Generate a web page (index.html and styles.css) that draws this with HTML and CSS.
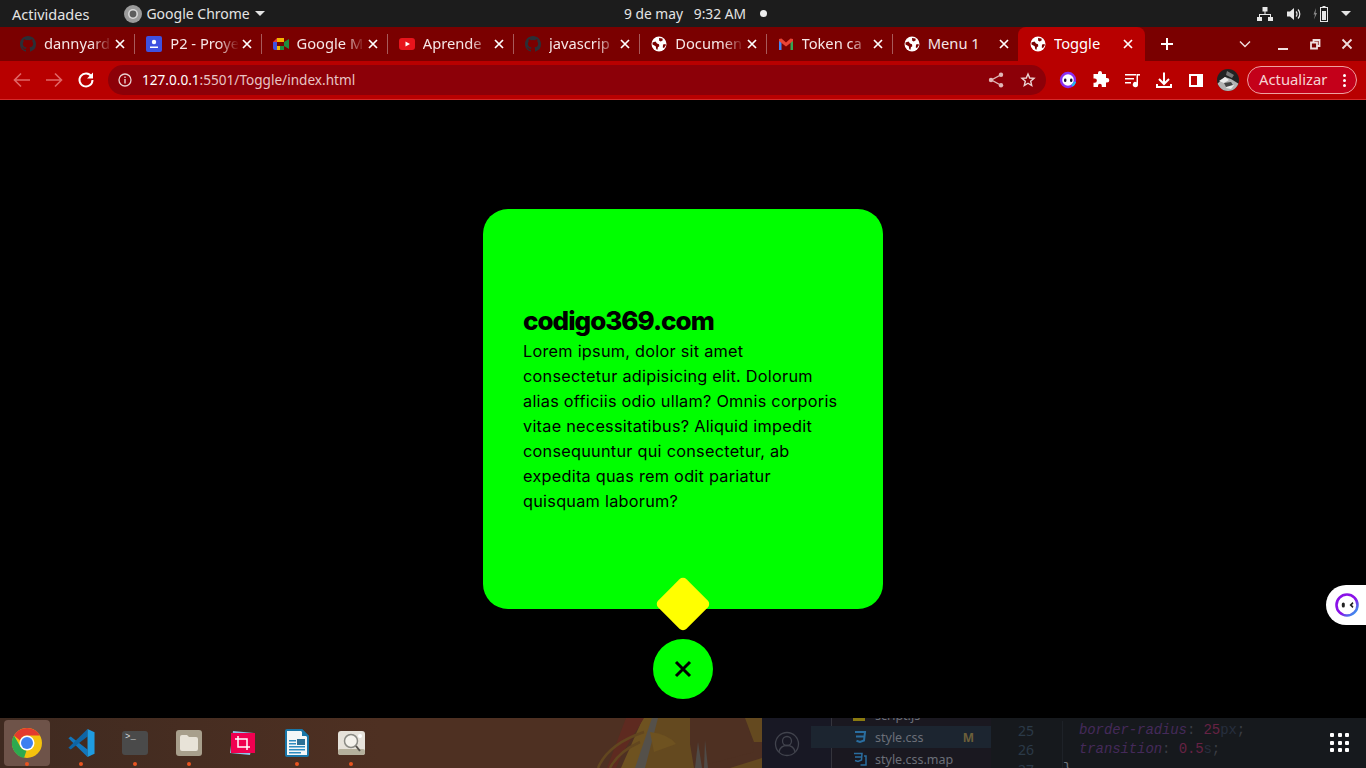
FILE: index.html
```html
<!DOCTYPE html>
<html lang="en">
<head>
    <meta charset="UTF-8">
    <meta name="viewport" content="width=device-width, initial-scale=1.0">
    <title>Toggle</title>
    <link rel="stylesheet" href="styles.css">
</head>
<body>
    <svg class="defs" width="0" height="0">
        <symbol id="i-github" viewBox="0 0 16 16"><path fill="#2b2f36" d="M8 0C3.58 0 0 3.58 0 8c0 3.54 2.29 6.53 5.47 7.59.4.07.55-.17.55-.38v-1.34c-2.23.48-2.7-1.07-2.7-1.07-.36-.92-.89-1.17-.89-1.17-.73-.5.05-.49.05-.49.8.06 1.23.83 1.23.83.71 1.22 1.87.87 2.33.66.07-.52.28-.87.5-1.07-1.77-.2-3.64-.89-3.64-3.95 0-.87.31-1.59.82-2.15-.08-.2-.36-1.02.08-2.12 0 0 .67-.21 2.2.82a7.6 7.6 0 0 1 4 0c1.53-1.04 2.2-.82 2.2-.82.44 1.1.16 1.92.08 2.12.51.56.82 1.27.82 2.15 0 3.07-1.87 3.75-3.65 3.95.29.25.54.73.54 1.48v2.2c0 .21.15.46.55.38A8 8 0 0 0 16 8c0-4.42-3.58-8-8-8z"/></symbol>
        <symbol id="i-globe" viewBox="0 0 16 16"><circle cx="8" cy="8" r="7.500" fill="#fff"/><path fill="#7a0000" d="M1.500 6.500 4.500 5.500l1.500 2 2 .8.300 2-1.400 1-.4 2.400-1.200-.4-.6-3L1.500 8.500zM8 2l3.400.4.4 1.800-2 1.200-1.600-.6zM12 8.500l2.500-.6.300 1.400-1.800 2.700-1.200-.6z"/></symbol>
        <symbol id="i-close" viewBox="0 0 16 16"><path fill="none" stroke="currentColor" stroke-width="1.700" d="M4 4l8 8M12 4l-8 8"/></symbol>
        <symbol id="i-css" viewBox="0 0 14 14"><path fill="none" stroke="#2a6ea0" stroke-width="2" d="M2 2h10l-1 8.500L7 12l-3.500-1.200M3 6.500h8"/></symbol>
        <symbol id="i-cssmap" viewBox="0 0 14 14"><path fill="none" stroke="#2a6ea0" stroke-width="1.500" d="M1 1.500h8L8.500 8 5 9.500 2 8.500M2 5h6.500M11 4h2v9H7.500"/></symbol>
    </svg>

    <header class="top-bar">
        <span class="top-left">
            <span class="activities">Actividades</span>
            <span class="app-name">
                <svg class="app-icon" viewBox="0 0 18 18"><circle cx="9" cy="9" r="9" fill="#9b9b9b"/><circle cx="9" cy="9" r="5" fill="#d8d8d8"/><circle cx="9" cy="9" r="3.400" fill="#5d5d5d"/></svg>
                Google Chrome
                <i class="caret"></i>
            </span>
        </span>
        <span class="clock">9 de may&nbsp;&nbsp; 9:32 AM</span>
        <i class="rec-dot"></i>
        <span class="tray">
            <svg width="16" height="16" viewBox="0 0 16 16" fill="#e8e8e8"><path d="M5.500 1h5v4.500h-5zM0 11h5v4H0zM11 11h5v4h-5zM7.500 5.500h1V8h5.500v3h-1V9H3v2H2V8h5.500z"/></svg>
            <svg width="16" height="16" viewBox="0 0 16 16" fill="#e8e8e8"><path d="M1 5.500h3L8 2v12l-4-3.500H1z"/><path fill="none" stroke="#e8e8e8" stroke-width="1.200" d="M10 5.500a3.500 3.500 0 0 1 0 5M12 3.500a6.500 6.500 0 0 1 0 9"/></svg>
            <svg class="battery" width="20" height="16" viewBox="0 0 20 16"><path fill="#8a8a8a" d="M6 2 3.500 8.500h1.500l-1 5 3-6.500H5.500z"/><path fill="#e8e8e8" d="M12.500 0h3v1h-3zM10 1h8v15h-8zm1 1v13h6V2z"/><path fill="#e8e8e8" d="M12 5h4v9h-4z"/></svg>
            <i class="caret"></i>
        </span>
    </header>

    <nav class="tab-strip">
        <div class="tab"><svg class="favicon"><use href="#i-github"/></svg><span class="tab-title">dannyard</span><svg class="tab-close"><use href="#i-close"/></svg></div>
        <div class="tab"><svg class="favicon" viewBox="0 0 16 16"><rect width="16" height="16" rx="2" fill="#3f51e0"/><circle cx="8" cy="6" r="2.200" fill="#fff"/><path fill="#fff" d="M4 10.500h8V12H4z"/></svg><span class="tab-title">P2 - Proye</span><svg class="tab-close"><use href="#i-close"/></svg></div>
        <div class="tab"><svg class="favicon" viewBox="0 0 16 16"><path fill="#f4b400" d="M4 2h7v4H4z"/><path fill="#1e8e3e" d="M7 10h4v4H7zM11 6l5-3v10l-5-3z"/><path fill="#e53935" d="M0 6l4-4v4z"/><path fill="#3f51e0" d="M0 6h4v8H2a2 2 0 0 1-2-2z"/><path fill="#7a0000" d="M4 6h7v4H4z"/><path fill="#f4b400" d="M4 10h3v4H4z"/></svg><span class="tab-title">Google M</span><svg class="tab-close"><use href="#i-close"/></svg></div>
        <div class="tab"><svg class="favicon" viewBox="0 0 16 16"><rect y="2" width="16" height="12" rx="3" fill="#e8141c"/><path fill="#fff" d="M6.500 5.500 11 8l-4.500 2.500z"/></svg><span class="tab-title">Aprende</span><svg class="tab-close"><use href="#i-close"/></svg></div>
        <div class="tab"><svg class="favicon"><use href="#i-github"/></svg><span class="tab-title">javascrip</span><svg class="tab-close"><use href="#i-close"/></svg></div>
        <div class="tab"><svg class="favicon"><use href="#i-globe"/></svg><span class="tab-title">Documen</span><svg class="tab-close"><use href="#i-close"/></svg></div>
        <div class="tab"><svg class="favicon" viewBox="0 0 16 16"><path fill="#4285f4" d="M1 3.500 3.500 4v10H1z"/><path fill="#34a853" d="M12.500 4l2.500-.5V14h-2.500z"/><path fill="#ea4335" d="M1 3l2.500-.5L8 6.500l4.500-4L15 3v2l-7 5.500L1 5z"/></svg><span class="tab-title">Token ca</span><svg class="tab-close"><use href="#i-close"/></svg></div>
        <div class="tab no-sep"><svg class="favicon"><use href="#i-globe"/></svg><span class="tab-title tab-title-full">Menu 1</span><svg class="tab-close"><use href="#i-close"/></svg></div>
        <div class="tab tab-active"><svg class="favicon"><use href="#i-globe"/></svg><span class="tab-title tab-title-full">Toggle</span><svg class="tab-close"><use href="#i-close"/></svg></div>
        <svg class="new-tab" width="14" height="14" viewBox="0 0 14 14"><path stroke="#fff" stroke-width="2" d="M7 1v12M1 7h12"/></svg>
        <span class="win-buttons">
            <svg width="12" height="8" viewBox="0 0 12 8"><path fill="none" stroke="#f0dede" stroke-width="1.400" d="M1 1.500l5 5 5-5"/></svg>
            <svg width="16" height="16" viewBox="0 0 16 16"><path fill="#f0dede" d="M3 12h10v2H3z"/></svg>
            <svg width="16" height="16" viewBox="0 0 16 16"><path fill="none" stroke="#f0dede" stroke-width="1.800" d="M4 6.500h6v6H4zM6.500 6.500V4h6v6H10"/></svg>
            <svg width="16" height="16" viewBox="0 0 16 16"><path fill="none" stroke="#f0dede" stroke-width="1.800" d="M3.500 3.500l9 9M12.500 3.500l-9 9"/></svg>
        </span>
    </nav>

    <div class="toolbar">
        <svg class="nav-btn" viewBox="0 0 32 32"><path fill="none" stroke="#e06666" stroke-width="1.600" d="M24 16H9M15 9.500 8.500 16l6.500 6.500"/></svg>
        <svg class="nav-btn" viewBox="0 0 32 32"><path fill="none" stroke="#e06666" stroke-width="1.600" d="M8 16h15M17 9.500l6.500 6.500-6.500 6.500"/></svg>
        <svg class="nav-btn" viewBox="0 0 32 32"><path fill="none" stroke="#fff" stroke-width="2" d="M21.500 12.500A6.500 6.500 0 1 0 22.500 16"/><path fill="#fff" d="M23 8.500v6h-6z"/></svg>
        <div class="omnibox">
            <svg class="info-icon" width="14" height="14" viewBox="0 0 14 14"><circle cx="7" cy="7" r="6" fill="none" stroke="#e8d0d0" stroke-width="1.300"/><path fill="#e8d0d0" d="M6.300 6h1.400v4.500H6.300zM6.300 3.500h1.400v1.400H6.300z"/></svg>
            <span class="url"><b>127.0.0.1</b>:5501/Toggle/index.html</span>
            <svg class="omni-icon" viewBox="0 0 32 32"><path fill="none" stroke="#e0b8b8" stroke-width="1.400" d="M20.500 11 11.500 16l9 5"/><circle cx="21" cy="10.800" r="2.200" fill="#e0b8b8"/><circle cx="11" cy="16" r="2.200" fill="#e0b8b8"/><circle cx="21" cy="21.200" r="2.200" fill="#e0b8b8"/></svg>
            <svg class="omni-icon" viewBox="0 0 32 32"><path fill="none" stroke="#ecd4d4" stroke-width="1.400" d="M16 10l1.700 4 4.300.4-3.300 2.800 1 4.300-3.700-2.300-3.700 2.300 1-4.300-3.300-2.800 4.300-.4z"/></svg>
        </div>
        <div class="ext-group">
            <svg class="nav-btn" viewBox="0 0 32 32"><circle cx="16" cy="16" r="7" fill="#fff" stroke="#8a2cf0" stroke-width="2.400"/><path fill="none" stroke="#22b8f0" stroke-width="2.400" d="M20 21.700a7 7 0 0 0 3-4"/><rect x="12" y="14.500" width="2.400" height="3.500" rx="1.200" fill="#1a1030"/><rect x="18" y="14.500" width="2.400" height="3.500" rx="1.200" fill="#1a1030"/></svg>
            <svg class="nav-btn" viewBox="0 0 32 32"><path fill="#fff" d="M14 9a2 2 0 0 1 4 0v1h4v4h1a2.300 2.300 0 0 1 0 4.600h-1V23h-4.200v-1.300a1.900 1.900 0 0 0-3.800 0V23H9.500v-4.200h1.200a2.200 2.200 0 0 0 0-4.400H9.500V10H14z"/></svg>
            <svg class="nav-btn" viewBox="0 0 32 32"><path fill="#fff" d="M9 10h11v1.500H9zM9 14h9v1.500H9zM9 18h6v1.500H9zM20.500 10h1.500v10.500a2.600 2.600 0 1 1-1.500-2.300z"/><path fill="#fff" d="M21 10h3v1.600h-3z"/></svg>
            <svg class="nav-btn" viewBox="0 0 32 32"><path fill="none" stroke="#fff" stroke-width="2" d="M16 8.500v11M11 15l5 5 5-5M9 20v3h14v-3"/></svg>
            <svg class="nav-btn" viewBox="0 0 32 32"><rect x="9" y="10" width="14" height="13" fill="#fff"/><rect x="11" y="12" width="6" height="9" fill="#b80000"/></svg>
            <svg class="nav-btn" viewBox="0 0 32 32"><defs><clipPath id="avatar"><circle cx="16" cy="16" r="11"/></clipPath></defs><g clip-path="url(#avatar)"><rect x="5" y="5" width="22" height="22" fill="#222"/><path fill="#b4b4b4" d="M5 20l8-7 6 2 8 5v7H10z"/><path fill="#ececec" d="M7 17l6-4 4 3-5 3zM16 20l6 1-3 4-5-1z"/><path fill="#444" d="M12 19l7-1 2 3-7 2z"/><path fill="#777" d="M15 7l7 4-2 3-6-3z"/></g></svg>
        </div>
        <div class="update-pill"><span class="pill-label">Actualizar</span><span class="dots"><i></i><i></i><i></i></span></div>
    </div>
    <div class="toolbar-line"></div>

    <main class="page">
        <section class="card">
            <h2>codigo369.com</h2>
            <p>Lorem ipsum, dolor sit amet consectetur adipisicing elit. Dolorum alias officiis odio ullam? Omnis corporis vitae necessitatibus? Aliquid impedit consequuntur qui consectetur, ab expedita quas rem odit pariatur quisquam laborum?</p>
            <span class="diamond"></span>
        </section>
        <button class="toggle-btn" type="button">
            <svg width="18" height="18" viewBox="0 0 18 18"><path stroke="#000" stroke-width="3" d="M2 2l14 14M16 2L2 16"/></svg>
        </button>
        <div class="side-widget">
            <svg width="26" height="26" viewBox="0 0 26 26"><defs><linearGradient id="ring" x1="0" y1="0" x2="1" y2="1"><stop offset="0.550" stop-color="#8a12e8"/><stop offset="1" stop-color="#22b8f0"/></linearGradient></defs><circle cx="13" cy="13" r="10.500" fill="#fff" stroke="url(#ring)" stroke-width="2.600"/><rect x="7.800" y="10.500" width="3" height="5" rx="1.500" fill="#222"/><path fill="#222" d="M18.500 10l-3 3 3 3 1-1.200-1.500-1.800 1.500-1.800z"/></svg>
        </div>
    </main>

    <footer class="dock">
        <div class="wallpaper">
            <svg class="wall-art" width="762" height="50" viewBox="0 0 762 50">
                <path fill="#64491f" d="M643 0h50l8 50h-75z"/>
                <path fill="#6e5220" d="M643 0h14l-14 50h-22z"/>
                <path fill="#5e2a20" d="M626 0h18l-22 36-6 14h-9z"/>
                <path fill="none" stroke="#62461f" stroke-width="2.500" d="M598 50q10-24 46-36M610 50q8-16 30-26"/>
                <path fill="#54504a" d="M652 0h6l-13 50h-10z"/>
                <path fill="#6e5220" d="M650 14q18 2 26 12l-22 8z"/>
                <path fill="#4e3022" d="M690 0h56l8 34-60 16-4-24z"/>
                <path fill="#4f4a46" d="M695 50l3-26 4 26zM704 50l1-28 3 28z"/>
                <path fill="#64491f" d="M745 0h17v24h-8zM730 50l32-10v10z"/>
            </svg>
            <div class="dock-icons">
                <div class="dock-item dock-active">
                    <svg width="32" height="32" viewBox="0 0 32 32"><circle cx="16" cy="16" r="15" fill="#f4c20d"/><path fill="#e33b2e" d="M3 8.500A15 15 0 0 1 29 8.500H16a7.500 7.500 0 0 0-7 5z"/><path fill="#2da94f" d="M3 8.500l6.500 11.500a7.500 7.500 0 0 0 6 3.500L13 31A15 15 0 0 1 3 8.500z"/><circle cx="16" cy="16" r="7.500" fill="#fff"/><circle cx="16" cy="16" r="6" fill="#3d7ff0"/></svg>
                    <i class="run-dot"></i>
                </div>
                <div class="dock-item">
                    <svg width="28" height="30" viewBox="0 0 30 32"><path fill="#1277bd" d="M1.500 11 4 9 22 23v8z"/><path fill="#0e65a5" d="M1.500 21 4 23 22 9V1z"/><path fill="#1f9ce0" d="M22 1l7.500 3.600v22.800L22 31z"/></svg>
                    <i class="run-dot"></i>
                </div>
                <div class="dock-item">
                    <div class="terminal-icon">&gt;_</div>
                    <i class="run-dot"></i>
                </div>
                <div class="dock-item">
                    <svg width="26" height="26" viewBox="0 0 26 26"><rect width="26" height="26" rx="3" fill="#a89f8c"/><path fill="#e8e3d8" d="M4 7a2 2 0 0 1 2-2h5l2 2h7a2 2 0 0 1 2 2v10a2 2 0 0 1-2 2H6a2 2 0 0 1-2-2z"/></svg>
                    <i class="run-dot"></i>
                </div>
                <div class="dock-item">
                    <svg width="28" height="28" viewBox="0 0 28 28"><path fill="#8ec3ea" d="M4 2l21 2-4 22L1 24z"/><rect x="2" y="4" width="24" height="20" fill="#f00050"/><path fill="none" stroke="#fff" stroke-width="1.500" d="M9 7v11h12M6 10h12v11"/></svg>
                </div>
                <div class="dock-item">
                    <svg width="24" height="28" viewBox="0 0 24 28"><path fill="#1976a8" d="M2 0h15l7 7v19a2 2 0 0 1-2 2H2a2 2 0 0 1-2-2V2a2 2 0 0 1 2-2z"/><path fill="#f4f7f8" d="M2 2h14l6 6v18H2z"/><path fill="#1976a8" d="M17 0l7 7h-7z"/><path fill="#2d8cc0" d="M4 11h7v1.400H4zM4 14h7v1.400H4zM4 17h16v1.400H4zM4 20h16v1.400H4zM4 23h12v1.400H4z"/><rect x="12" y="10" width="8" height="6" fill="#2d6f94"/></svg>
                    <i class="run-dot"></i>
                </div>
                <div class="dock-item">
                    <svg width="27" height="24" viewBox="0 0 27 24"><rect width="27" height="24" rx="3" fill="#e6e2da"/><rect y="18" width="27" height="6" rx="2" fill="#b5b09c"/><circle cx="13" cy="10" r="6.500" fill="#f4f2ec" stroke="#8a8a84" stroke-width="1.500"/><path stroke="#55524c" stroke-width="2" d="M18 15l4 5"/><circle cx="22" cy="5" r="2" fill="#fff"/></svg>
                    <i class="run-dot"></i>
                </div>
            </div>
        </div>
        <div class="code-panel">
            <div class="activity-bar">
                <svg width="26" height="26" viewBox="0 0 26 26"><g fill="none" stroke="#41434d" stroke-width="1.300"><circle cx="13" cy="13" r="11.500"/><circle cx="13" cy="10" r="4.500"/><path d="M5 21c1-5 5-6.500 8-6.500s7 1.500 8 6.500"/></g></svg>
            </div>
            <div class="file-list">
                <div class="file-row"><i class="js-icon"></i>script.js</div>
                <div class="file-row file-selected"><svg class="file-icon"><use href="#i-css"/></svg>style.css<span class="file-badge">M</span></div>
                <div class="file-row"><svg class="file-icon"><use href="#i-cssmap"/></svg>style.css.map</div>
            </div>
            <div class="editor">
                <div class="gutter"><span>25</span><span>26</span><span>27</span></div>
                <div class="code">
                    <div><em class="prop">border-radius</em>: <span class="num">25</span><span class="unit">px</span>;</div>
                    <div><em class="prop">transition</em>: <span class="num">0.5</span><span class="unit">s</span>;</div>
                    <div class="brace">}</div>
                </div>
                <div class="app-grid"><i></i><i></i><i></i><i></i><i></i><i></i><i></i><i></i><i></i></div>
            </div>
        </div>
    </footer>
</body>
</html>
```

FILE: styles.css
```css
* {
    box-sizing: border-box;
}
body {
    margin: 0;
    height: 100vh;
    overflow: hidden;
    display: flex;
    flex-direction: column;
    background-color: #000;
    font-family: "Noto Sans", sans-serif;
    font-size: 14px;
}
.defs {
    display: none;
}

/* ubuntu top bar */
.top-bar {
    height: 27px;
    flex: none;
    display: flex;
    align-items: center;
    background-color: #1c1c1c;
    color: #e4e4e4;
    padding: 0 15px 0 12px;
}
.top-left {
    width: 612px;
    display: flex;
    align-items: center;
}
.activities {
    font-size: 14.500px;
}
.app-name {
    margin-left: 35px;
    display: flex;
    align-items: center;
    gap: 4px;
}
.app-icon {
    width: 18px;
    height: 18px;
}
.caret {
    width: 0;
    height: 0;
    margin-left: 1px;
    border-left: 5px solid transparent;
    border-right: 5px solid transparent;
    border-top: 5px solid #e4e4e4;
}
.clock {
    width: 122px;
    font-size: 13.800px;
    white-space: nowrap;
}
.rec-dot {
    width: 7px;
    height: 7px;
    margin-left: 14px;
    border-radius: 50%;
    background-color: #eee;
}
.tray {
    margin-left: auto;
    display: flex;
    align-items: center;
    gap: 13px;
}
.battery {
    margin: 0 -3px 0 -5px;
}

/* tabs */
.tab-strip {
    height: 34px;
    flex: none;
    display: flex;
    align-items: center;
    background-color: #7a0000;
    padding-left: 10px;
    color: #f6e6e6;
}
.tab {
    width: 126.250px;
    height: 34px;
    flex: none;
    display: flex;
    align-items: center;
    padding: 0 8px 0 10px;
    position: relative;
}
.tab::after {
    content: "";
    position: absolute;
    right: 1px;
    top: 7px;
    height: 20px;
    width: 1px;
    background-color: #a85a5a;
}
.no-sep::after {
    display: none;
}
.favicon {
    width: 16px;
    height: 16px;
    flex: none;
}
.tab-title {
    flex: 1;
    min-width: 0;
    margin: 0 0 2px 8px;
    font-size: 14.700px;
    overflow: hidden;
    white-space: nowrap;
    -webkit-mask-image: linear-gradient(to right, #000 70%, transparent 100%);
    mask-image: linear-gradient(to right, #000 70%, transparent 100%);
}
.tab-title-full {
    -webkit-mask-image: none;
    mask-image: none;
}
.tab-close {
    width: 16px;
    height: 16px;
    flex: none;
    color: #fff;
}
.tab-active {
    width: 127px;
    margin-left: -2px;
    background-color: #b80000;
    border-radius: 8px 8px 0 0;
    padding-left: 12px;
    padding-right: 9px;
    color: #fff;
}
.tab-active::after {
    display: none;
}
.new-tab {
    margin-left: 15px;
    flex: none;
}
.win-buttons {
    margin-left: auto;
    display: flex;
    align-items: center;
    gap: 16px;
    padding-right: 11px;
}
.win-buttons svg:first-child {
    margin-right: 8px;
}

/* address bar */
.toolbar {
    height: 38px;
    flex: none;
    display: flex;
    align-items: center;
    background-color: #b80000;
    padding-left: 6px;
}
.toolbar-line {
    height: 1px;
    flex: none;
    background-color: #d42a2a;
}
.nav-btn {
    width: 32px;
    height: 32px;
    flex: none;
}
.omnibox {
    flex: 1;
    height: 30px;
    margin-left: 6px;
    display: flex;
    align-items: center;
    padding: 0 2px 0 10px;
    border-radius: 15px;
    background-color: #8c0008;
    color: #e8c4c4;
}
.url {
    flex: 1;
    margin: 0 0 2px 10px;
    font-size: 13.600px;
}
.url b {
    font-weight: 400;
    color: #fff;
}
.omni-icon {
    width: 32px;
    height: 32px;
}
.ext-group {
    margin-left: 6px;
    display: flex;
    align-items: center;
}
.update-pill {
    width: 110px;
    height: 28px;
    margin: 0 9px 0 3px;
    padding-left: 11px;
    display: flex;
    align-items: center;
    justify-content: space-between;
    border: 1px solid #eea0a0;
    border-radius: 14px;
    background-color: #c4001a;
    color: #f6d4d4;
}
.pill-label {
    margin-bottom: 2px;
    font-size: 14.800px;
}
.dots {
    display: flex;
    flex-direction: column;
    gap: 2px;
    padding-right: 10px;
}
.dots i {
    width: 3px;
    height: 3px;
    border-radius: 50%;
    background-color: #fff;
}

/* page content */
.page {
    flex: 1;
    display: flex;
    flex-direction: column;
    align-items: center;
    padding-top: 109px;
    position: relative;
    background-color: #000;
}
.card {
    width: 400px;
    height: 400px;
    padding: 0 40px 2px;
    display: flex;
    flex-direction: column;
    justify-content: center;
    position: relative;
    border-radius: 25px;
    background-color: #0f0;
    color: #000;
    font-family: Inter, sans-serif;
}
.card h2 {
    margin: 0;
    font-size: 26px;
    line-height: 37px;
    font-weight: 800;
    letter-spacing: -1px;
}
.card p {
    width: 318px;
    margin: 0;
    font-size: 16.300px;
    line-height: 25px;
    letter-spacing: 0.25px;
}
.diamond {
    position: absolute;
    left: 50%;
    bottom: -15px;
    width: 40px;
    height: 40px;
    margin-left: -20px;
    border-radius: 5px;
    background-color: #ff0;
    transform: rotate(45deg);
}
.toggle-btn {
    width: 60px;
    height: 60px;
    margin-top: 30px;
    padding: 0;
    display: flex;
    align-items: center;
    justify-content: center;
    border: none;
    border-radius: 50%;
    background-color: #0f0;
}
.side-widget {
    position: absolute;
    right: 0;
    top: 485px;
    width: 40px;
    height: 40px;
    padding-left: 8px;
    display: flex;
    align-items: center;
    border-radius: 20px 0 0 20px;
    background-color: #fff;
}

/* dock and what shows behind it */
.dock {
    height: 50px;
    flex: none;
    display: flex;
    overflow: hidden;
}
.wallpaper {
    width: 762px;
    flex: none;
    position: relative;
    background: linear-gradient(to right, #3f2a20, #4e3022 50%);
}
.wall-art {
    position: absolute;
    left: 0;
    top: 0;
}
.dock-icons {
    display: flex;
    position: relative;
}
.dock-item {
    width: 54px;
    height: 50px;
    display: flex;
    flex-direction: column;
    align-items: center;
    justify-content: center;
    position: relative;
}
.dock-active::before {
    content: "";
    position: absolute;
    left: 4px;
    top: 2px;
    width: 46px;
    height: 46px;
    border-radius: 4px;
    background-color: #6e5349;
}
.dock-item svg {
    position: relative;
}
.run-dot {
    position: absolute;
    left: 25px;
    top: 44px;
    width: 4px;
    height: 4px;
    border-radius: 50%;
    background-color: #e95420;
}
.terminal-icon {
    width: 26px;
    height: 24px;
    padding: 1px 0 0 3px;
    border-radius: 3px;
    background-color: #4a4a4a;
    color: #ddd;
    font: 9px "Liberation Mono", monospace;
}
.code-panel {
    flex: 1;
    display: flex;
    background-color: #16191d;
}
.activity-bar {
    width: 70px;
    flex: none;
    padding: 13px 0 0 12px;
    background-color: #181824;
    border-right: 1px solid #34343c;
}
.file-list {
    width: 159px;
    flex: none;
    margin-top: -14px;
    color: #6b6f78;
    font-size: 12.500px;
    background-color: #1a1820;
}
.file-row {
    height: 22px;
    display: flex;
    align-items: center;
    padding-left: 21px;
    white-space: nowrap;
}
.file-selected {
    margin-left: -21px;
    padding-left: 42px;
    background-color: #1c2530;
}
.js-icon {
    width: 12px;
    height: 12px;
    margin-right: 10px;
    background-color: #8a7a10;
}
.file-icon {
    width: 14px;
    height: 14px;
    margin-right: 8px;
    flex: none;
}
.file-badge {
    margin-left: auto;
    padding-right: 17px;
    color: #6c5f3a;
    font-weight: 700;
    font-size: 12px;
}
.editor {
    flex: 1;
    display: flex;
    padding-top: 3px;
    font: 14px/19.400px "Liberation Mono", monospace;
    color: #3a3d44;
}
.gutter {
    width: 43px;
    flex: none;
    display: flex;
    flex-direction: column;
    align-items: flex-end;
    color: #2b3a48;
    font-family: "Noto Sans", sans-serif;
}
.code {
    width: 268px;
    flex: none;
    margin-left: 28px;
    padding-left: 16px;
    border-left: 1px solid #1e2228;
    letter-spacing: -0.1px;
    white-space: nowrap;
}
.prop {
    color: #452a5a;
}
.num {
    color: #662244;
}
.unit {
    color: #262e3e;
}
.brace {
    margin-left: -16px;
    color: #70747a;
}
.app-grid {
    width: 19px;
    height: 19px;
    margin-top: 12px;
    flex: none;
    display: grid;
    grid-template-columns: repeat(3, 4px);
    gap: 3.500px;
}
.app-grid i {
    width: 4px;
    height: 4px;
    border-radius: 1px;
    background-color: #fff;
}
```
